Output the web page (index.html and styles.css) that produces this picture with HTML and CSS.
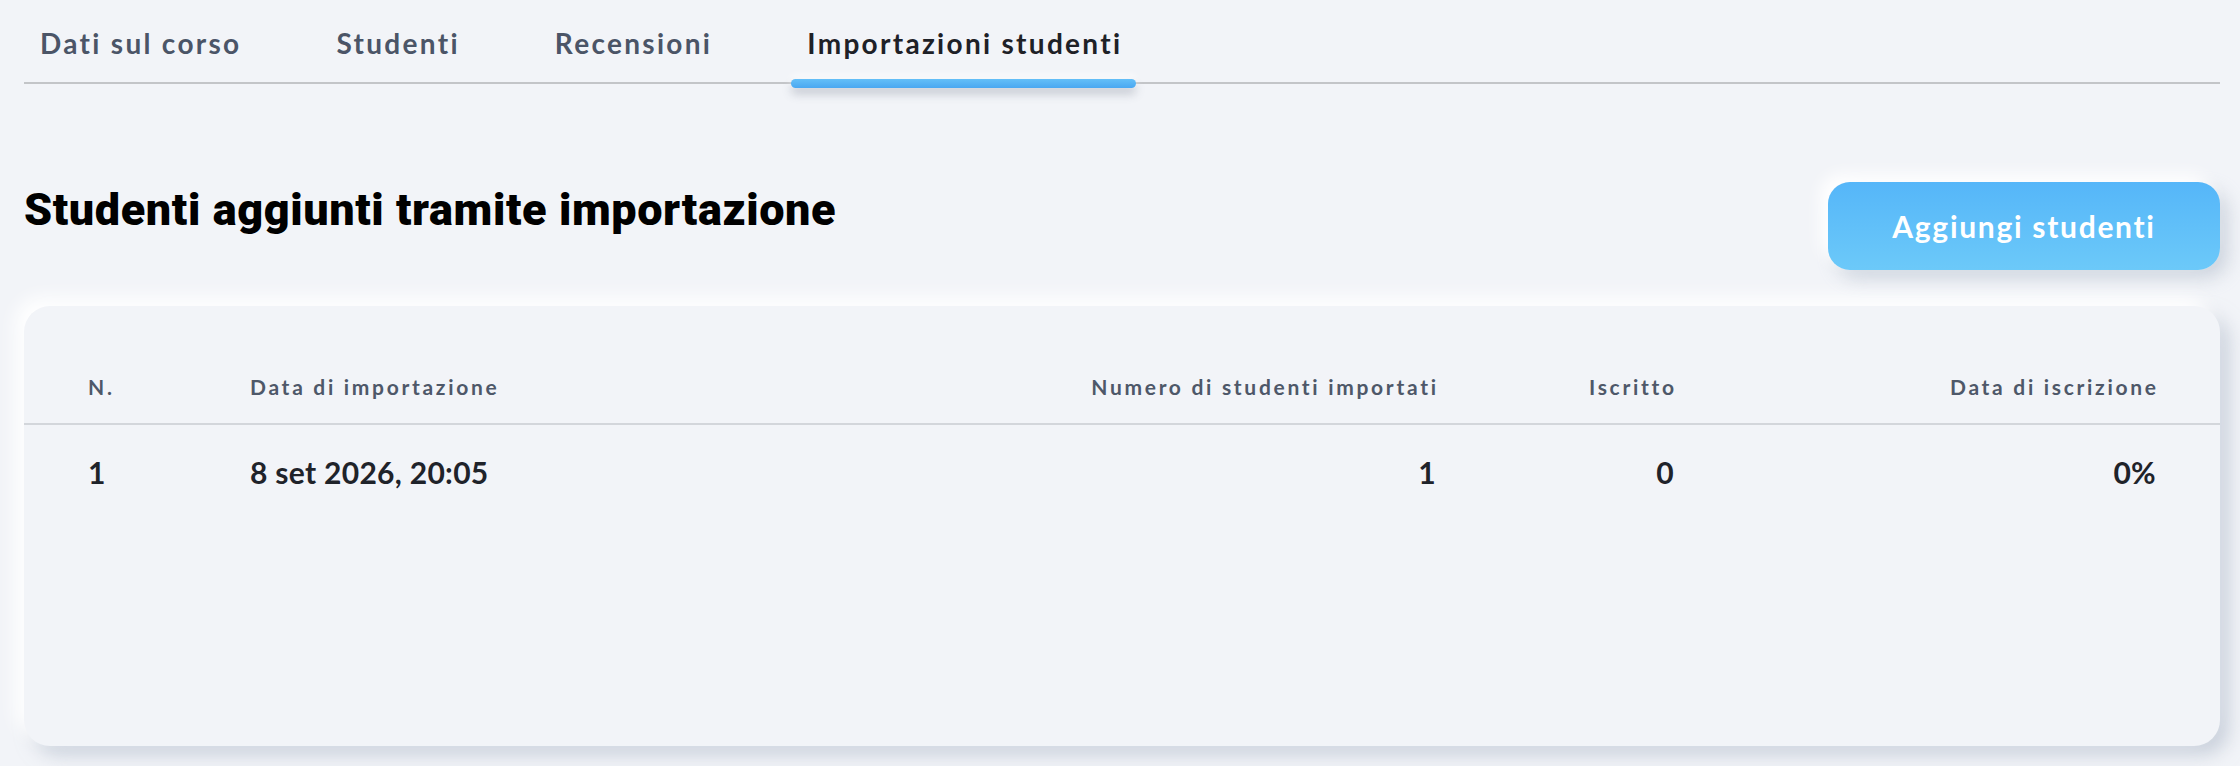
FILE: index.html
```html
<!DOCTYPE html>
<html lang="it">
<head>
<meta charset="utf-8">
<title>Importazioni studenti</title>
<link rel="stylesheet" href="styles.css">
</head>
<body>
<div class="page">
  <nav class="tabs">
    <a class="tab">Dati sul corso</a>
    <a class="tab">Studenti</a>
    <a class="tab">Recensioni</a>
    <a class="tab active">Importazioni studenti</a>
  </nav>

  <div class="section-head">
    <h1 class="title">Studenti aggiunti tramite importazione</h1>
    <button class="btn-add">Aggiungi studenti</button>
  </div>

  <div class="card">
    <div class="trow thead">
      <div class="cell">N.</div>
      <div class="cell">Data di importazione</div>
      <div class="cell right">Numero di studenti importati</div>
      <div class="cell right">Iscritto</div>
      <div class="cell right">Data di iscrizione</div>
    </div>
    <div class="trow tbody">
      <div class="cell">1</div>
      <div class="cell">8 set 2026, 20:05</div>
      <div class="cell right">1</div>
      <div class="cell right">0</div>
      <div class="cell right">0%</div>
    </div>
  </div>
</div>
</body>
</html>
```
FILE: styles.css
```css
html, body {
  margin: 0;
  padding: 0;
  background: #f2f4f8;
}
body {
  font-family: Lato, "Noto Sans", "Liberation Sans", sans-serif;
  width: 2240px;
  height: 766px;
  overflow: hidden;
}
.page {
  padding: 0 20px 0 24px;
}

/* Tabs */
.tabs {
  display: flex;
  gap: 65px;
  border-bottom: 2px solid #c3c5c8;
  height: 84px;
  box-sizing: border-box;
  padding-top: 25px;
}
.tab {
  position: relative;
  padding: 0 14px 0 16px;
  font-size: 28px;
  line-height: 36px;
  font-weight: 700;
  color: #4b5567;
  letter-spacing: 2.3px;
}
.tab.active {
  color: #1e2127;
}
.tab.active::after {
  content: "";
  position: absolute;
  left: 0;
  right: 0;
  top: 54px;
  height: 9px;
  border-radius: 5px;
  background: linear-gradient(#64bff8, #4aa8f1);
  box-shadow: 0 6px 10px rgba(80, 90, 110, 0.28), 0 -3px 8px rgba(255,255,255,0.9);
}

/* Section head */
.section-head {
  display: flex;
  justify-content: space-between;
  align-items: flex-start;
  margin-top: 98px;
}
.title {
  margin: 1px 0 0 0;
  font-family: Roboto, Lato, sans-serif;
  font-size: 45px;
  line-height: 54px;
  font-weight: 900;
  color: #000;
  letter-spacing: 0.6px;
}
.btn-add {
  width: 392px;
  height: 88px;
  border: 0;
  border-radius: 22px;
  background: linear-gradient(#55b6f9, #6cc9f9);
  color: #fff;
  font-family: inherit;
  font-size: 30px;
  font-weight: 700;
  letter-spacing: 1.7px;
  box-shadow: -8px -8px 16px #ffffff, 8px 8px 18px rgba(160, 172, 190, 0.45);
}

/* Card */
.card {
  margin-top: 36px;
  height: 440px;
  border-radius: 26px;
  background: #f2f4f8;
  box-shadow: -9px -9px 18px #ffffff, 9px 9px 18px rgba(163, 176, 194, 0.5);
  padding-top: 66px;
  box-sizing: border-box;
}
.trow {
  display: grid;
  grid-template-columns: 162px 1fr 400px 238px 482px;
  padding: 0 64px;
}
.thead {
  font-size: 21px;
  line-height: 30px;
  font-weight: 700;
  color: #4e5869;
  letter-spacing: 2.7px;
  padding-bottom: 21px;
  border-bottom: 2px solid #d3d6db;
}
.thead .right {
  margin-right: -2.7px;
}
.tbody {
  padding-top: 27px;
  font-size: 30px;
  line-height: 40px;
  font-weight: 700;
  color: #1f232a;
  letter-spacing: 0.3px;
}
.right {
  text-align: right;
}
```
